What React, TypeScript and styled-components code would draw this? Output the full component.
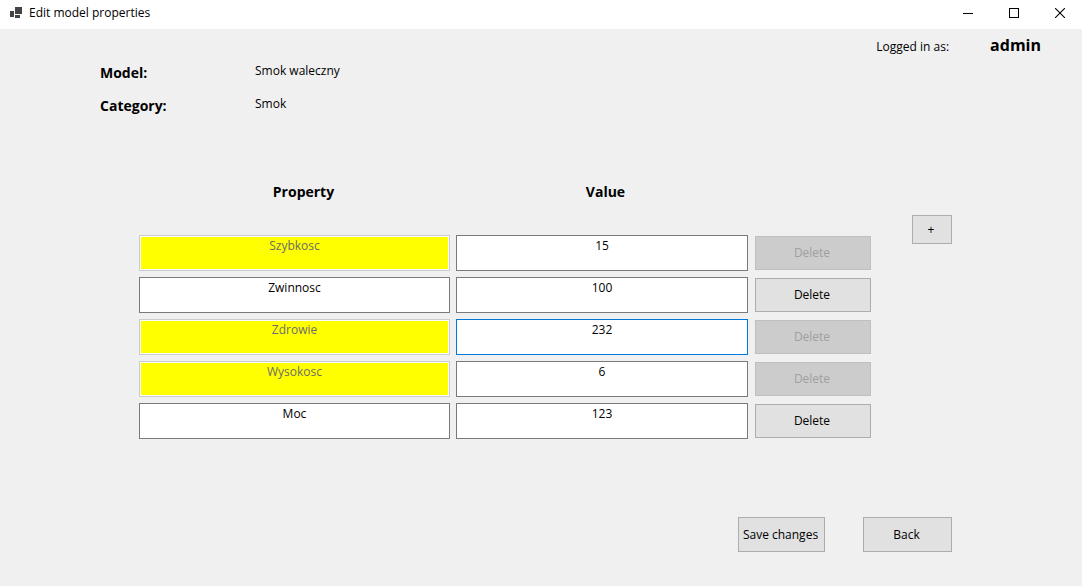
import React, { useState } from "react";
import styled, { createGlobalStyle } from "styled-components";

const GlobalStyle = createGlobalStyle`
  *, *::before, *::after { box-sizing: border-box; }
  html { background: #f0f0f0; }
  body {
    margin: 0;
    background: #f0f0f0;
    color: #000;
    font-family: "Segoe UI", "Open Sans", "Noto Sans", sans-serif;
    font-size: 12px;
    line-height: 16px;
  }
  button, textarea { font: inherit; }
`;

const Window = styled.div`
  display: flex;
  flex-direction: column;
  min-height: 100vh;
`;

const TitleBar = styled.header`
  display: flex;
  align-items: center;
  height: 29px;
  padding: 0 0 3px 10px;
  background: #fff;
`;

const AppIcon = styled.svg`
  width: 12px;
  height: 12px;
  margin-right: 7px;
`;

const Title = styled.h1`
  flex: 1;
  margin: 0;
  font-size: 12px;
  font-weight: 400;
`;

const CaptionButton = styled.button`
  display: flex;
  align-items: center;
  justify-content: center;
  width: 46px;
  height: 26px;
  padding: 0 0 0 2px;
  border: 0;
  background: transparent;

  &:hover { background: #e5e5e5; }
`;

const Account = styled.div`
  display: flex;
  justify-content: flex-end;
  align-items: baseline;
  gap: 41px;
  height: 32px;
  padding: 6px 41px 0 0;
`;

const UserName = styled.strong`
  font-size: 16px;
  line-height: 20px;
`;

const Content = styled.main`
  display: flex;
  flex-direction: column;
  padding: 2px 130px 34px 100px;
`;

const Details = styled.dl`
  display: grid;
  grid-template-columns: 155px 1fr;
  grid-auto-rows: 33px;
  margin: 0;
`;

const DetailName = styled.dt`
  font-size: 14px;
  line-height: 20px;
  font-weight: 700;
`;

const DetailValue = styled.dd`
  margin: 0;
`;

const Editor = styled.form`
  display: flex;
  align-items: flex-start;
  gap: 41px;
  padding: 53px 0 0 39px;
`;

const PropertyTable = styled.table`
  display: block;
  flex: 1;
`;

const TableHead = styled.thead`
  display: block;
  padding-bottom: 33px;
`;

const TableBody = styled.tbody`
  display: flex;
  flex-direction: column;
  gap: 6px;
`;

const Row = styled.tr`
  display: grid;
  grid-template-columns: 317fr 299fr 116px;
  align-items: center;
`;

const ColumnName = styled.th<{ $indent?: boolean }>`
  padding: 0 0 0 ${(p) => (p.$indent ? "12px" : "0")};
  font-size: 14px;
  line-height: 20px;
  font-weight: 700;
  text-align: center;
`;

const Cell = styled.td<{ $gap?: number }>`
  display: flex;
  padding: 0 ${(p) => p.$gap ?? 0}px 0 0;
`;

const TextBox = styled.textarea`
  flex: 1;
  min-width: 0;
  height: 36px;
  padding: 2px 3px;
  border: 1px solid #7a7a7a;
  border-radius: 0;
  outline: 0;
  overflow: hidden;
  resize: none;
  background: #fff;
  color: #000;
  text-align: center;

  &:disabled {
    border-color: #ccc;
    background: #ff0;
    box-shadow: inset 0 0 0 1px #fff;
    color: #6d6d6d;
  }
`;

const ValueBox = styled(TextBox)<{ $active: boolean }>`
  border-color: ${(p) => (p.$active ? "#0078d7" : "#7a7a7a")};
`;

const Button = styled.button<{ $width: number; $height: number }>`
  width: ${(p) => p.$width}px;
  height: ${(p) => p.$height}px;
  padding: 0 2px 0 0;
  border: 1px solid #adadad;
  border-radius: 0;
  background: #e1e1e1;
  color: #000;
  white-space: nowrap;

  &:hover:enabled { border-color: #0078d7; background: #e5f1fb; }

  &:disabled {
    border-color: #bfbfbf;
    background: #ccc;
    color: #a0a0a0;
  }
`;

const AddArea = styled.div`
  padding-top: 33px;
`;

const Actions = styled.footer`
  display: flex;
  justify-content: flex-end;
  gap: 38px;
  padding-top: 78px;
`;

type Property = { name: string; value: string; locked: boolean };

const initialProperties: Property[] = [
  { name: "Szybkosc", value: "15", locked: true },
  { name: "Zwinnosc", value: "100", locked: false },
  { name: "Zdrowie", value: "232", locked: true },
  { name: "Wysokosc", value: "6", locked: true },
  { name: "Moc", value: "123", locked: false },
];

export default function App() {
  const [properties, setProperties] = useState(initialProperties);
  const [active, setActive] = useState(2);

  const update = (index: number, change: Partial<Property>) =>
    setProperties((list) => list.map((p, i) => (i === index ? { ...p, ...change } : p)));

  return (
    <>
      <GlobalStyle />
      <Window>
        <TitleBar>
          <AppIcon viewBox="0 0 12 12" fill="#444" shapeRendering="crispEdges" aria-hidden="true">
            <rect x="0" y="4" width="4" height="6" />
            <rect x="5" y="0" width="7" height="7" />
            <rect x="5" y="8" width="5" height="3" />
          </AppIcon>
          <Title>Edit model properties</Title>
          <CaptionButton type="button" aria-label="Minimize">
            <svg width="10" height="10" shapeRendering="crispEdges" aria-hidden="true">
              <path d="M0 5.5H10" stroke="#000" />
            </svg>
          </CaptionButton>
          <CaptionButton type="button" aria-label="Maximize">
            <svg width="10" height="10" shapeRendering="crispEdges" aria-hidden="true">
              <rect x="0.5" y="0.5" width="9" height="9" fill="none" stroke="#000" />
            </svg>
          </CaptionButton>
          <CaptionButton type="button" aria-label="Close">
            <svg width="10" height="10" aria-hidden="true">
              <path d="M0 0L10 10M10 0L0 10" stroke="#000" strokeWidth="1.1" />
            </svg>
          </CaptionButton>
        </TitleBar>
        <Account>
          <span>Logged in as:</span>
          <UserName>admin</UserName>
        </Account>
        <Content>
          <Details>
            <DetailName>Model:</DetailName>
            <DetailValue>Smok waleczny</DetailValue>
            <DetailName>Category:</DetailName>
            <DetailValue>Smok</DetailValue>
          </Details>
          <Editor id="properties" onSubmit={(e) => e.preventDefault()}>
            <PropertyTable>
              <TableHead>
                <Row>
                  <ColumnName scope="col" $indent>Property</ColumnName>
                  <ColumnName scope="col">Value</ColumnName>
                </Row>
              </TableHead>
              <TableBody>
                {properties.map((p, i) => (
                  <Row key={i}>
                    <Cell $gap={6}>
                      <TextBox
                        aria-label="Property"
                        rows={1}
                        spellCheck={false}
                        value={p.name}
                        disabled={p.locked}
                        onChange={(e) => update(i, { name: e.target.value })}
                      />
                    </Cell>
                    <Cell $gap={7}>
                      <ValueBox
                        aria-label={`Value of ${p.name}`}
                        rows={1}
                        spellCheck={false}
                        value={p.value}
                        $active={active === i}
                        onFocus={() => setActive(i)}
                        onChange={(e) => update(i, { value: e.target.value })}
                      />
                    </Cell>
                    <Cell>
                      <Button
                        type="button"
                        $width={116}
                        $height={34}
                        disabled={p.locked}
                        onClick={() => setProperties((list) => list.filter((_, n) => n !== i))}
                      >
                        Delete
                      </Button>
                    </Cell>
                  </Row>
                ))}
              </TableBody>
            </PropertyTable>
            <AddArea>
              <Button
                type="button"
                aria-label="Add property"
                $width={40}
                $height={29}
                onClick={() => setProperties((list) => [...list, { name: "", value: "", locked: false }])}
              >
                +
              </Button>
            </AddArea>
          </Editor>
          <Actions>
            <Button type="submit" form="properties" $width={87} $height={35}>Save changes</Button>
            <Button type="button" $width={89} $height={35}>Back</Button>
          </Actions>
        </Content>
      </Window>
    </>
  );
}
